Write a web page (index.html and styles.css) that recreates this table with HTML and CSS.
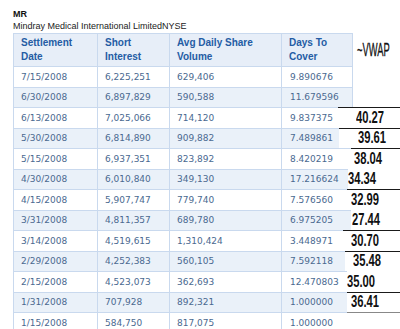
FILE: index.html
```html
<!DOCTYPE html>
<html lang="en">
<head>
  <meta charset="UTF-8">
  <title>MR Short Interest</title>
  <link rel="stylesheet" href="styles.css">
</head>
<body>
  <div class="sym">MR</div>
  <div class="name">Mindray Medical International LimitedNYSE</div>

  <div class="sheet">
    <table class="si">
      <colgroup>
        <col class="w1"><col class="w2"><col class="w3"><col class="w4">
      </colgroup>
      <thead>
        <tr>
          <th>Settlement<br>Date</th>
          <th>Short<br>Interest</th>
          <th>Avg Daily Share<br>Volume</th>
          <th>Days To<br>Cover</th>
        </tr>
      </thead>
      <tbody>
        <tr><td>7/15/2008</td><td>6,225,251</td><td>629,406</td><td>9.890676</td></tr>
        <tr><td>6/30/2008</td><td>6,897,829</td><td>590,588</td><td>11.679596</td></tr>
        <tr><td>6/13/2008</td><td>7,025,066</td><td>714,120</td><td>9.837375</td></tr>
        <tr><td>5/30/2008</td><td>6,814,890</td><td>909,882</td><td>7.489861</td></tr>
        <tr><td>5/15/2008</td><td>6,937,351</td><td>823,892</td><td>8.420219</td></tr>
        <tr><td>4/30/2008</td><td>6,010,840</td><td>349,130</td><td>17.216624</td></tr>
        <tr><td>4/15/2008</td><td>5,907,747</td><td>779,740</td><td>7.576560</td></tr>
        <tr><td>3/31/2008</td><td>4,811,357</td><td>689,780</td><td>6.975205</td></tr>
        <tr><td>3/14/2008</td><td>4,519,615</td><td>1,310,424</td><td>3.448971</td></tr>
        <tr><td>2/29/2008</td><td>4,252,383</td><td>560,105</td><td>7.592118</td></tr>
        <tr><td>2/15/2008</td><td>4,523,073</td><td>362,693</td><td>12.470803</td></tr>
        <tr><td>1/31/2008</td><td>707,928</td><td>892,321</td><td>1.000000</td></tr>
        <tr><td>1/15/2008</td><td>584,750</td><td>817,075</td><td>1.000000</td></tr>
      </tbody>
    </table>

    <!-- hand pasted VWAP column -->
    <div class="vwap">
      <div class="vwap-head"><span class="hand title">~VWAP</span></div>
      <div class="vwap-cell v1"><span class="hand">40.27</span></div>
      <div class="vwap-cell v2"><span class="hand">39.61</span></div>
      <div class="vwap-cell v3"><span class="hand">38.04</span></div>
      <div class="vwap-cell v4"><span class="hand">34.34</span></div>
      <div class="vwap-cell v5"><span class="hand">32.99</span></div>
      <div class="vwap-cell v6"><span class="hand">27.44</span></div>
      <div class="vwap-cell v7"><span class="hand">30.70</span></div>
      <div class="vwap-cell v8"><span class="hand">35.48</span></div>
      <div class="vwap-cell v9"><span class="hand">35.00</span></div>
      <div class="vwap-cell v10"><span class="hand">36.41</span></div>
      <div class="vwap-cell v11"></div>
    </div>
  </div>
</body>
</html>
```

FILE: styles.css
```css
body {
  margin: 0;
  padding: 8px 0 0 13px;
  background: #fff;
  font-family: 'Liberation Sans', Arial, sans-serif;
  overflow: hidden;
}
.sym {
  font-size: 9px;
  font-weight: bold;
  line-height: 12px;
  color: #111;
}
.name {
  font-size: 9px;
  line-height: 12px;
  color: #222;
}
.sheet {
  position: relative;
  margin-top: 1px;
}
.si {
  border-collapse: collapse;
  table-layout: fixed;
  width: 339px;
}
.w1 { width: 84px; }
.w2 { width: 72px; }
.w3 { width: 112px; }
.w4 { width: 71px; }
.si th, .si td {
  border: 1px solid #c9d9ee;
  text-align: left;
  padding: 0 0 0 7px;
  white-space: nowrap;
  overflow: hidden;
}
.si th {
  background: #e7eef8;
  color: #245ca4;
  font-size: 10px;
  font-weight: bold;
  line-height: 14px;
  height: 32px;
  vertical-align: middle;
}
.si td {
  font-family: 'DejaVu Sans', Verdana, sans-serif;
  font-size: 9px;
  color: #4a6990;
  height: 19.5px;
}
.si td:last-child { padding-left: 8px; }
.si tbody tr:nth-child(even) td { background: #eaf1f9; }

/* VWAP overlay */
.vwap {
  position: absolute;
  top: 0;
  left: 325px;
  width: 62px;
  display: flex;
  flex-direction: column;
}
.vwap-head {
  height: 74px;
  padding: 8px 0 0 19px;
  box-sizing: border-box;
}
.vwap-cell {
  height: 20.5px;
  box-sizing: border-box;
  border-top: 1px solid #1a1a1a;
  background: #fff;
  display: flex;
  align-items: center;
}
.hand {
  display: inline-block;
  font-family: 'Liberation Sans', Arial, sans-serif;
  font-size: 16px;
  font-weight: bold;
  color: #111;
  line-height: 18px;
  transform: scaleX(0.7);
  transform-origin: left center;
}
.hand.title {
  font-size: 18px;
  font-weight: normal;
  -webkit-text-stroke: 0.3px #111;
  transform: scaleX(0.52);
}
.v1 { margin-left: 0; padding-left: 18px; }
.v2 { margin-left: 1px; padding-left: 19px; }
.v3 { margin-left: 13px; padding-left: 3px; }
.v4 { margin-left: 10px; padding-left: 0; border-top-color: transparent; }
.v5 { margin-left: 9px; padding-left: 4px; }
.v6 { margin-left: 13px; padding-left: 1px; border-top-color: transparent; }
.v7 { margin-left: 5px; padding-left: 8px; }
.v8 { margin-left: 7px; padding-left: 8px; }
.v9 { margin-left: 9px; padding-left: 0; border-top-color: transparent; }
.v10 { margin-left: 9px; padding-left: 4px; }
.v11 { margin-left: 9px; border-top-color: #888; }
```
